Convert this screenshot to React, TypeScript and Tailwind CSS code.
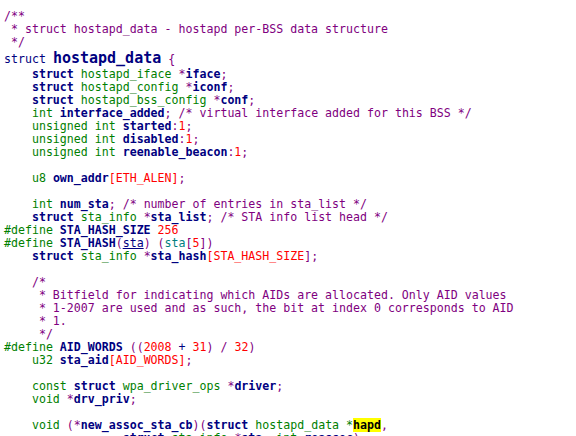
import React from "react"

type Seg = [string, string?]

// syntax colours
const C = "text-[#800080]" // comments
const P = "text-[#800080]" // punctuation
const K = "font-bold text-[#000080]" // keywords
const B = "font-bold text-[#000080]" // identifiers
const T = "text-[#008000]" // types / preproc
const N = "text-[#ff0000]" // numbers, macros
const IND = "    "

const before: Seg[][] = [
  [["/**", C]],
  [[" * struct hostapd_data - hostapd per-BSS data structure", C]],
  [[" */", C]],
]

const body: Seg[][] = [
  [[IND], ["struct", K], [" "], ["hostapd_iface", T], [" "], ["*", P], ["iface", B], [";", P]],
  [[IND], ["struct", K], [" "], ["hostapd_config", T], [" "], ["*", P], ["iconf", B], [";", P]],
  [[IND], ["struct", K], [" "], ["hostapd_bss_config", T], [" "], ["*", P], ["conf", B], [";", P]],
  [[IND], ["int", T], [" "], ["interface_added", B], [";", P], [" "], ["/* virtual interface added for this BSS */", C]],
  [[IND], ["unsigned int", T], [" "], ["started", B], [":", P], ["1", N], [";", P]],
  [[IND], ["unsigned int", T], [" "], ["disabled", B], [":", P], ["1", N], [";", P]],
  [[IND], ["unsigned int", T], [" "], ["reenable_beacon", B], [":", P], ["1", N], [";", P]],
  [],
  [[IND], ["u8", T], [" "], ["own_addr", B], ["[ETH_ALEN]", N], [";", P]],
  [],
  [[IND], ["int", T], [" "], ["num_sta", B], [";", P], [" "], ["/* number of entries in sta_list */", C]],
  [[IND], ["struct", K], [" "], ["sta_info", T], [" "], ["*", P], ["sta_list", B], [";", P], [" "], ["/* STA info list head */", C]],
  [["#define", T], [" "], ["STA_HASH_SIZE", B], [" "], ["256", N]],
  [["#define", T], [" "], ["STA_HASH", B], ["(", P], ["sta", "text-[#000080] underline"], [")", P], [" "], ["(", P], ["sta", "text-[#008080]"], ["[", P], ["5", N], ["])", P]],
  [[IND], ["struct", K], [" "], ["sta_info", T], [" "], ["*", P], ["sta_hash", B], ["[STA_HASH_SIZE", N], ["];", P]],
  [],
  [[IND], ["/*", C]],
  [[IND], [" * Bitfield for indicating which AIDs are allocated. Only AID values", C]],
  [[IND], [" * 1-2007 are used and as such, the bit at index 0 corresponds to AID", C]],
  [[IND], [" * 1.", C]],
  [[IND], [" */", C]],
  [["#define", T], [" "], ["AID_WORDS", B], [" "], ["((", P], ["2008", N], [" + ", "text-[#000080]"], ["31", N], [")", P], [" / ", P], ["32", N], [")", P]],
  [[IND], ["u32", T], [" "], ["sta_aid", B], ["[AID_WORDS]", N], [";", P]],
  [],
  [[IND], ["const", T], [" "], ["struct", K], [" "], ["wpa_driver_ops", T], [" "], ["*", P], ["driver", B], [";", P]],
  [[IND], ["void", T], [" "], ["*", P], ["drv_priv", B], [";", P]],
  [],
  [[IND], ["void", T], [" "], ["(*", P], ["new_assoc_sta_cb", B], [")(", P], ["struct", K], [" "], ["hostapd_data", T], [" "], ["*", T], ["hapd", "font-bold text-black bg-[#ffff00]"], [",", P]],
  [["                 "], ["struct", K], [" "], ["sta_info", T], [" "], ["*", P], ["sta", B], [",", P], [" "], ["int", T], [" "], ["reassoc", B], [");", P]],
]

function Line({ segs }: { segs: Seg[] }) {
  return (
    <div className="h-[13px] leading-[13px] whitespace-pre">
      {segs.length === 0 ? " " : segs.map((s, i) => (
        <span key={i} className={s[1]}>{s[0]}</span>
      ))}
    </div>
  )
}

export default function App() {
  return (
    <main
      className="w-[576px] h-[436px] overflow-hidden bg-white pt-[10px] pl-1 text-[11.6px] text-black"
      style={{ fontFamily: '"DejaVu Sans Mono", monospace' }}
    >
      {before.map((l, i) => <Line key={i} segs={l} />)}

      {/* struct heading */}
      <div className="h-[19px] leading-[19px] whitespace-pre">
        <span className="text-[#000080]">struct </span>
        <span className="text-[15px] font-bold text-[#000080]">hostapd_data</span>
        <span className={P}> {"{"}</span>
      </div>

      {body.map((l, i) => <Line key={i} segs={l} />)}
    </main>
  )
}
